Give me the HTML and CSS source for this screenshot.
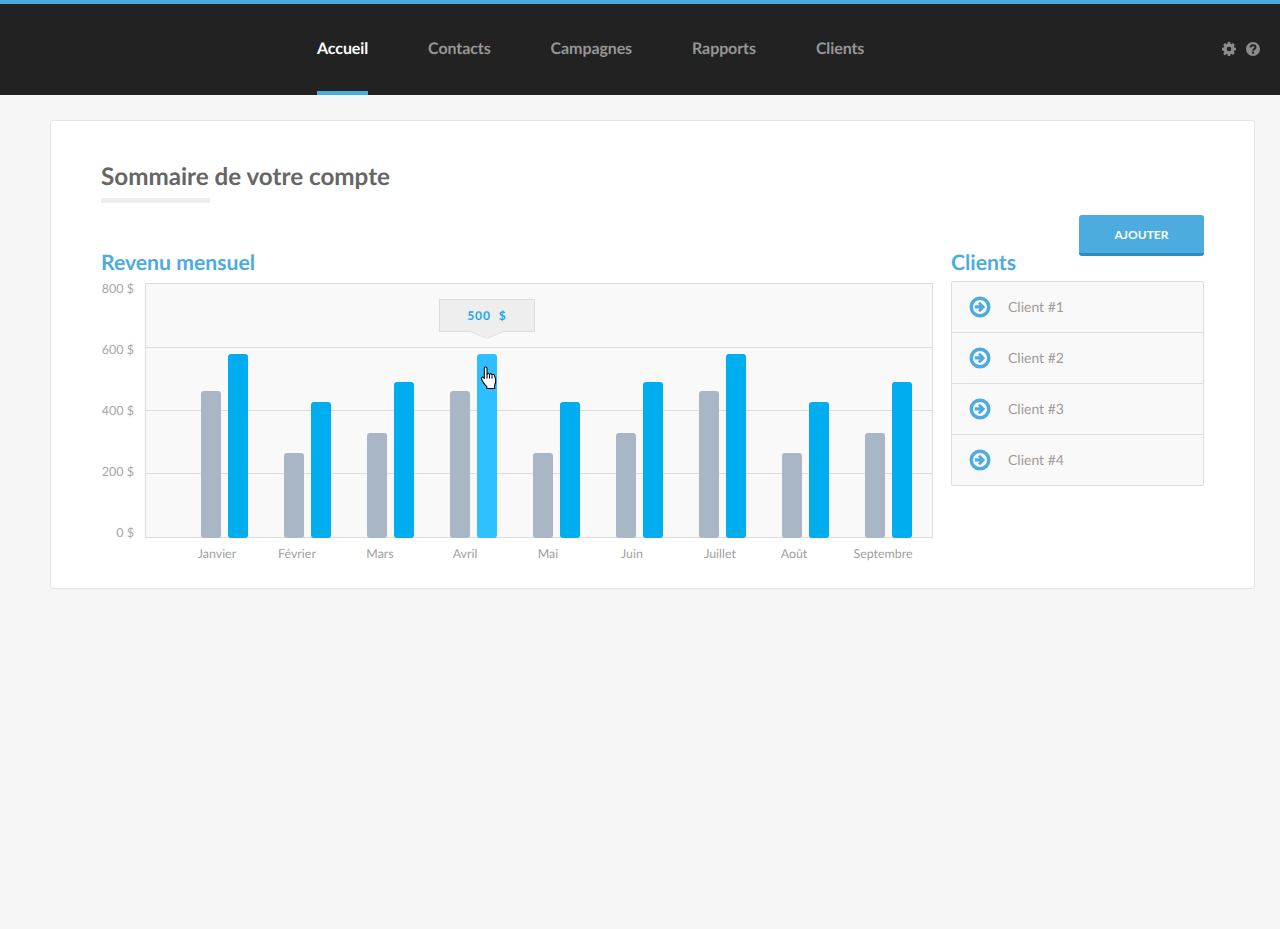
FILE: index.html
```html
<!DOCTYPE html>
<html lang="fr">
<head>
<meta charset="utf-8">
<title>Sommaire de votre compte</title>
<link rel="stylesheet" href="styles.css">
</head>
<body>
<header class="topbar">
  <nav class="nav">
    <a class="nav-item is-active">Accueil</a>
    <a class="nav-item">Contacts</a>
    <a class="nav-item">Campagnes</a>
    <a class="nav-item">Rapports</a>
    <a class="nav-item">Clients</a>
  </nav>
  <div class="tools">
    <svg class="tool" viewBox="0 0 14 14"><path fill="#8c8c8c" fill-rule="evenodd" d="M5.800 0h2.400l.3 1.800 1 .4L11 1.100l1.800 1.800-1.100 1.500.4 1 1.900.3v2.600l-1.900.3-.4 1 1.100 1.500-1.800 1.800-1.500-1.100-1 .4-.3 1.800H5.800l-.3-1.800-1-.4L3 13.400l-1.800-1.800 1.100-1.500-.4-1L0 8.300V5.700l1.900-.3.4-1-1.100-1.500L3 1.100l1.500 1.100 1-.4zM7 4.700a2.300 2.300 0 1 0 0 4.600 2.300 2.300 0 0 0 0-4.600z"/></svg>
    <svg class="tool" viewBox="0 0 14 14"><circle cx="7" cy="7" r="7" fill="#8c8c8c"/><path fill="none" stroke="#222" stroke-width="2" d="M4.500 5.400C4.700 4 5.700 3.300 7 3.300c1.500 0 2.500.9 2.500 2 0 1.900-2.500 1.600-2.500 3.400"/><rect x="6" y="9.700" width="2" height="2" fill="#222"/></svg>
  </div>
</header>

<main class="card">
  <h1 class="page-title">Sommaire de votre compte</h1>
  <div class="columns">
    <section class="revenue">
      <h2 class="section-title">Revenu mensuel</h2>
      <div class="chart">
        <div class="y-axis">
          <span>800 $</span><span>600 $</span><span>400 $</span><span>200 $</span><span>0 $</span>
        </div>
        <div class="plot">
          <i class="gridline g600"></i><i class="gridline g400"></i><i class="gridline g200"></i>
          <div class="bars">
            <div class="pair"><b class="bar grey" style="height:147px"></b><b class="bar blue" style="height:184px"></b></div>
            <div class="pair"><b class="bar grey" style="height:85px"></b><b class="bar blue" style="height:136px"></b></div>
            <div class="pair"><b class="bar grey" style="height:105px"></b><b class="bar blue" style="height:156px"></b></div>
            <div class="pair"><b class="bar grey" style="height:147px"></b><b class="bar hover" style="height:184px"></b></div>
            <div class="pair"><b class="bar grey" style="height:85px"></b><b class="bar blue" style="height:136px"></b></div>
            <div class="pair"><b class="bar grey" style="height:105px"></b><b class="bar blue" style="height:156px"></b></div>
            <div class="pair"><b class="bar grey" style="height:147px"></b><b class="bar blue" style="height:184px"></b></div>
            <div class="pair"><b class="bar grey" style="height:85px"></b><b class="bar blue" style="height:136px"></b></div>
            <div class="pair"><b class="bar grey" style="height:105px"></b><b class="bar blue" style="height:156px"></b></div>
          </div>
          <div class="tooltip">500&nbsp;&nbsp;$</div>
          <svg class="hand" viewBox="0 0 17 23"><path fill="#fff" stroke="#000" stroke-width="1" stroke-linejoin="round" d="M4 2.200c0-1.600 2.600-1.600 2.600 0V8c.3-1 2.200-1 2.400.2.300-1 2.200-.9 2.400.4.400-.8 2.200-.6 2.500.8l1 4c.3 2-.4 3.800-1 5v3.100H6.500V20C5 18.500 3.500 16.500 2.500 15l-1.200-2.500c-.6-1.300 1-2.500 2-1.400L4 12z"/><path fill="none" stroke="#000" d="M6.600 8v4M9 8.500V12M11.400 9v3"/></svg>
        </div>
      </div>
      <div class="x-axis">
        <span>Janvier</span><span>Février</span><span>Mars</span><span>Avril</span><span>Mai</span><span>Juin</span><span>Juillet</span><span>Août</span><span>Septembre</span>
      </div>
    </section>
    <aside class="clients">
      <div class="actions"><button class="add-btn">AJOUTER</button></div>
      <h2 class="section-title clients-title">Clients</h2>
      <ul class="client-list">
        <li class="client-row"><svg class="go" viewBox="0 0 22 22"><circle cx="11" cy="11" r="8.800" fill="none" stroke="#4dacdf" stroke-width="3.400"/><path fill="#4dacdf" d="M11 5.800l5.200 5.200-5.200 5.200-2-2 1.700-1.700H5.800V9.300h4.900L9 7.800z"/></svg><span>Client #1</span></li>
        <li class="client-row"><svg class="go" viewBox="0 0 22 22"><circle cx="11" cy="11" r="8.800" fill="none" stroke="#4dacdf" stroke-width="3.400"/><path fill="#4dacdf" d="M11 5.800l5.200 5.200-5.200 5.200-2-2 1.700-1.700H5.800V9.300h4.900L9 7.800z"/></svg><span>Client #2</span></li>
        <li class="client-row"><svg class="go" viewBox="0 0 22 22"><circle cx="11" cy="11" r="8.800" fill="none" stroke="#4dacdf" stroke-width="3.400"/><path fill="#4dacdf" d="M11 5.800l5.200 5.200-5.200 5.200-2-2 1.700-1.700H5.800V9.300h4.900L9 7.800z"/></svg><span>Client #3</span></li>
        <li class="client-row"><svg class="go" viewBox="0 0 22 22"><circle cx="11" cy="11" r="8.800" fill="none" stroke="#4dacdf" stroke-width="3.400"/><path fill="#4dacdf" d="M11 5.800l5.200 5.200-5.200 5.200-2-2 1.700-1.700H5.800V9.300h4.900L9 7.800z"/></svg><span>Client #4</span></li>
      </ul>
    </aside>
  </div>
</main>
</body>
</html>
```
FILE: styles.css
```css
* { box-sizing: border-box; }
html, body { margin: 0; padding: 0; }
body {
  min-height: 929px;
  background: #f6f6f6;
  font-family: Lato, "Liberation Sans", sans-serif;
  color: #666;
  text-rendering: geometricPrecision;
}
.topbar {
  display: flex;
  align-items: stretch;
  justify-content: space-between;
  height: 95px;
  padding: 0 20px 0 317px;
  background: #222;
  border-top: 4px solid #4dacdf;
}
.nav { display: flex; gap: 60px; }
.nav-item {
  display: flex;
  align-items: center;
  height: 91px;
  padding-top: 2px;
  border-bottom: 4px solid transparent;
  font-size: 16px;
  font-weight: 700;
  letter-spacing: -0.1px;
  color: #969696;
}
.nav-item.is-active { color: #fff; border-bottom-color: #4dacdf; }
.tools { display: flex; align-items: center; gap: 10px; padding-bottom: 2px; }
.tool { width: 14px; height: 14px; display: block; }

.card {
  width: 1205px;
  height: 469px;
  margin: 25px 0 0 50px;
  padding: 40px 50px 0;
  background: #fff;
  border: 1px solid #e4e4e4;
  border-radius: 3px;
}
.page-title {
  width: 109px;
  height: 42px;
  margin: 0;
  border-bottom: 5px solid #eee;
  font-size: 24.2px;
  line-height: 32px;
  font-weight: 700;
  color: #666;
  white-space: nowrap;
}
.columns { display: flex; gap: 18px; }
.revenue { width: 832px; padding-top: 46px; }
.clients { width: 253px; padding-top: 12px; }
.section-title {
  margin: 0;
  font-size: 21.2px;
  line-height: 26px;
  font-weight: 700;
  color: #4dacdf;
}
.chart { display: flex; margin-top: 8px; }
.y-axis {
  display: flex;
  flex-direction: column;
  justify-content: space-between;
  align-items: flex-end;
  width: 33px;
  height: 262px;
  margin: -3px 11px 0 0;
  font-size: 12.5px;
  line-height: 18px;
  color: #a6a6a6;
  white-space: nowrap;
}
.plot {
  position: relative;
  width: 788px;
  height: 255px;
  background: #f9f9f9;
  border: 1px solid #ddd;
}
.gridline { position: absolute; left: 0; right: 0; height: 1px; background: #ddd; }
.g600 { top: 63px; }
.g400 { top: 126px; }
.g200 { top: 189px; }
.bars {
  position: absolute;
  left: 55px;
  bottom: -1px;
  display: flex;
  gap: 36px;
}
.pair { display: flex; align-items: flex-end; gap: 7px; }
.bar { display: block; width: 20px; border-radius: 3px; }
.grey { background: #a8b6c6; }
.blue { background: #00aeef; }
.hover { background: #2dbfff; }
.tooltip {
  position: absolute;
  left: 293px;
  top: 15px;
  width: 96px;
  height: 33px;
  background: #eee;
  border: 1px solid #ddd;
  font-size: 12px;
  line-height: 32px;
  font-weight: 700;
  letter-spacing: 1px;
  text-align: center;
  color: #1ba8ee;
}
.tooltip::before,
.tooltip::after {
  content: "";
  position: absolute;
  left: 30px;
  width: 0;
  height: 0;
  border-left: 17px solid transparent;
  border-right: 17px solid transparent;
}
.tooltip::before { top: 32px; border-top: 7px solid #e4e4e4; }
.tooltip::after { top: 31px; border-top: 7px solid #eee; }
.hand { position: absolute; left: 334px; top: 82px; width: 18px; height: 24px; }
.x-axis {
  display: grid;
  grid-template-columns: 80px 80px 86px 84px 82px 86px 90px 58px 120px;
  margin: 3px 0 0 76px;
  font-size: 12.4px;
  line-height: 18px;
  text-align: center;
  color: #a0a0a0;
}
.actions { display: flex; justify-content: flex-end; }
.add-btn {
  width: 125px;
  height: 41px;
  padding: 0;
  background: #4dacdf;
  border: 0;
  border-bottom: 3px solid #2d8bc0;
  border-radius: 3px;
  font-family: inherit;
  font-size: 12px;
  font-weight: 700;
  color: #fff;
}
.clients-title { margin-top: -7px; }
.client-list {
  margin: 6px 0 0;
  padding: 0;
  list-style: none;
  background: #f9f9f9;
  border: 1px solid #ddd;
  border-radius: 2px;
}
.client-row {
  display: flex;
  align-items: center;
  gap: 17px;
  height: 51px;
  padding: 0 0 1px 17px;
  border-bottom: 1px solid #ddd;
  font-size: 14px;
  color: #a09a96;
}
.client-row:last-child { border-bottom: 0; height: 50px; }
.go { width: 22px; height: 22px; display: block; }
```
